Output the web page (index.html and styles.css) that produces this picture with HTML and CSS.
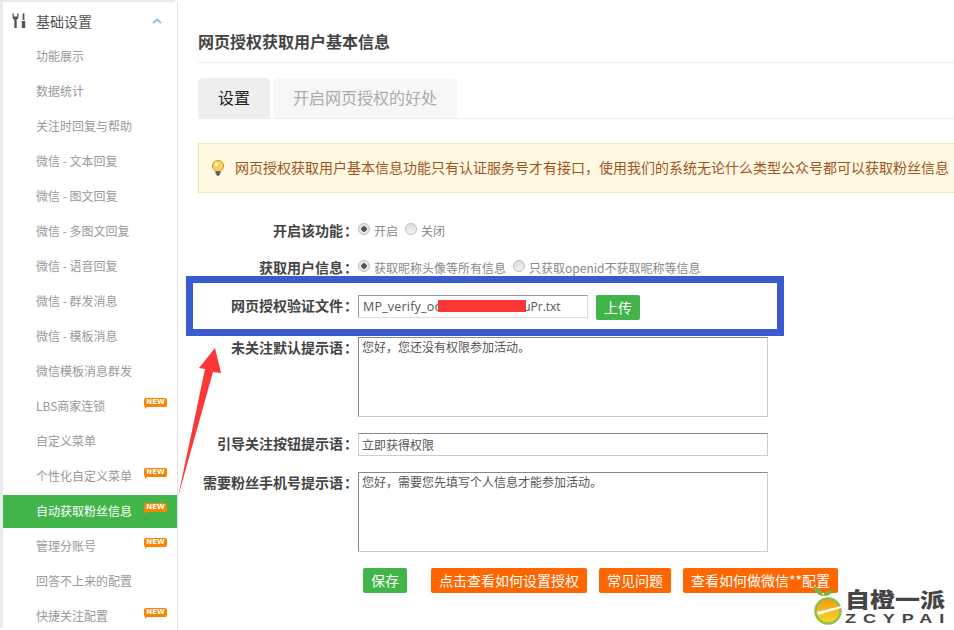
FILE: index.html
```html
<!DOCTYPE html>
<html lang="zh-CN">

<head>
    <meta charset="UTF-8">
    <title>网页授权获取用户基本信息</title>
    <link rel="stylesheet" href="styles.css">
</head>

<body>

    <!-- Sidebar -->
    <div class="sidebar">
        <div class="side-head">
            <svg class="tools-icon" width="14" height="16" viewBox="0 0 14 16">
                <path d="M0.5 0.5 L0.5 4 Q0.5 6 2.3 6.6 L2.3 15 L4.7 15 L4.7 6.6 Q6.5 6 6.5 4 L6.5 0.5 L5.2 0.5 L5.2 3.4 L1.8 3.4 L1.8 0.5 Z" fill="#555"/>
                <path d="M10.6 0.5 L12.4 0.5 L12.4 7 L10.6 7 Z M9.8 8 L13.2 8 L13.2 15 L9.8 15 Z" fill="#555"/>
            </svg>
            <span>基础设置</span>
            <svg class="chevron" width="10" height="6" viewBox="0 0 10 6">
                <path d="M1 5 L5 1.5 L9 5" fill="none" stroke="#8cc4e0" stroke-width="2"/>
            </svg>
        </div>
        <a class="side-item">功能展示</a>
        <a class="side-item">数据统计</a>
        <a class="side-item">关注时回复与帮助</a>
        <a class="side-item">微信 - 文本回复</a>
        <a class="side-item">微信 - 图文回复</a>
        <a class="side-item">微信 - 多图文回复</a>
        <a class="side-item">微信 - 语音回复</a>
        <a class="side-item">微信 - 群发消息</a>
        <a class="side-item">微信 - 模板消息</a>
        <a class="side-item">微信模板消息群发</a>
        <a class="side-item">LBS商家连锁<span class="new-badge">NEW</span></a>
        <a class="side-item">自定义菜单</a>
        <a class="side-item">个性化自定义菜单<span class="new-badge">NEW</span></a>
        <a class="side-item active">自动获取粉丝信息<span class="new-badge">NEW</span></a>
        <a class="side-item">管理分账号<span class="new-badge">NEW</span></a>
        <a class="side-item">回答不上来的配置</a>
        <a class="side-item">快捷关注配置<span class="new-badge">NEW</span></a>
    </div>

    <!-- Main content -->
    <div class="main">
        <h1 class="page-title">网页授权获取用户基本信息</h1>

        <div class="tabs">
            <div class="tab current">设置</div>
            <div class="tab">开启网页授权的好处</div>
        </div>

        <div class="notice">
            <svg class="bulb" width="14" height="16" viewBox="0 0 14 16">
                <circle cx="7" cy="6" r="5.6" fill="#f8d25c" stroke="#d89a2a" stroke-width="1"/>
                <circle cx="5.4" cy="4.4" r="1.8" fill="#fdf3c0"/>
                <rect x="4.5" y="11" width="5" height="3" fill="#666"/>
                <rect x="5.5" y="14" width="3" height="1.5" fill="#444"/>
            </svg>
            <span>网页授权获取用户基本信息功能只有认证服务号才有接口，使用我们的系统无论什么类型公众号都可以获取粉丝信息</span>
        </div>

        <!-- Form -->
        <div class="form-row row-radio gap-13">
            <label class="form-label">开启该功能<span class="colon">：</span></label>
            <div class="radios">
                <span class="radio checked"></span><span class="radio-text">开启</span>
                <span class="radio"></span><span class="radio-text">关闭</span>
            </div>
        </div>
        <div class="form-row row-radio gap-14">
            <label class="form-label">获取用户信息<span class="colon">：</span></label>
            <div class="radios">
                <span class="radio checked"></span><span class="radio-text">获取昵称头像等所有信息</span>
                <span class="radio"></span><span class="radio-text">只获取openid不获取昵称等信息</span>
            </div>
        </div>
        <div class="form-row gap-17">
            <label class="form-label">网页授权验证文件<span class="colon">：</span></label>
            <div class="file-input">MP_verify_oo<span class="file-tail">uPr.txt</span></div>
            <a class="btn green upload">上传</a>
        </div>
        <div class="form-row gap-16">
            <label class="form-label">未关注默认提示语<span class="colon">：</span></label>
            <div class="text-box tall">您好，您还没有权限参加活动。</div>
        </div>
        <div class="form-row gap-16">
            <label class="form-label">引导关注按钮提示语<span class="colon">：</span></label>
            <div class="text-box">立即获得权限</div>
        </div>
        <div class="form-row gap-16">
            <label class="form-label">需要粉丝手机号提示语<span class="colon">：</span></label>
            <div class="text-box tall">您好，需要您先填写个人信息才能参加活动。</div>
        </div>

        <div class="actions">
            <a class="btn green save">保存</a>
            <a class="btn orange">点击查看如何设置授权</a>
            <a class="btn orange">常见问题</a>
            <a class="btn orange">查看如何做微信**配置</a>
        </div>
    </div>

    <!-- Annotations over the screenshot -->
    <div class="mark-box"></div>
    <div class="mark-redact"></div>
    <svg class="mark-arrow" width="60" height="160" viewBox="0 0 60 160">
        <path d="M45 8 L51 33 L43 32 L8 157 L35 29 L29 28 Z" fill="#fb3737"/>
    </svg>

    <!-- Watermark logo -->
    <div class="logo">
        <svg class="logo-mark" width="30" height="40" viewBox="0 0 30 40">
            <defs>
                <linearGradient id="orange-fill" x1="0" y1="0" x2="0" y2="1">
                    <stop offset="0" stop-color="#f29a10"/>
                    <stop offset="1" stop-color="#fbd92a"/>
                </linearGradient>
            </defs>
            <path d="M9 10 Q2 8 0 0 Q8 1 10 9 Z" fill="#7cb342"/>
            <path d="M10 9 Q13 4 21 4 Q18 10 11 10 Z" fill="#7cb342"/>
            <circle cx="15" cy="25" r="12.5" fill="url(#orange-fill)" stroke="#8cc24a" stroke-width="2.5"/>
            <path d="M4 26 L28 20 L28 22 L5 29 Z" fill="#fff"/>
        </svg>
        <div class="logo-text">
            <div class="logo-cn">自橙一派</div>
            <div class="logo-en">ZCYPAI</div>
        </div>
    </div>

</body>

</html>
```

FILE: styles.css
```css
/* Page */
html, body {
    height: 630px;
    overflow: hidden;
}

body {
    margin: 0;
    display: flex;
    align-items: flex-start;
    background-color: #fff;
    font-family: "Noto Sans CJK SC", "Noto Sans", sans-serif;
    position: relative;
}

/* Sidebar */
.sidebar {
    width: 174px;
    height: 628px;
    margin-top: 2px;
    margin-left: 3px;
    flex-shrink: 0;
    overflow: hidden;
    background-color: #fff;
    box-shadow: -3px -2px 0 #e9ebf1;
    border-right: 1px solid #dfe2ea;
}

.side-head {
    height: 38px;
    display: flex;
    align-items: center;
    color: #555;
    font-size: 14px;
    line-height: 36px;
}

.tools-icon {
    margin-left: 9px;
    margin-right: 10px;
}

.chevron {
    margin-left: 60px;
}

.side-item {
    display: block;
    position: relative;
    height: 33px;
    line-height: 31px;
    margin-bottom: 2px;
    padding-left: 33px;
    color: #999;
    font-size: 12px;
}

.side-item.active {
    background-color: #42b54a;
    color: #fff;
}

/* NEW badge on menu items */
.new-badge {
    position: absolute;
    top: 8px;
    left: 141px;
    width: 23px;
    height: 9px;
    background-color: #f98500;
    border-radius: 2px;
    color: #fff;
    font-family: "DejaVu Sans", sans-serif;
    font-size: 7px;
    font-weight: bold;
    line-height: 9px;
    text-align: center;
}

.new-badge::after {
    content: "";
    position: absolute;
    left: 1px;
    bottom: -2px;
    border-top: 3px solid #f98500;
    border-right: 3px solid transparent;
}

/* Main */
.main {
    flex: 1;
    padding: 30px 0 0 20px;
    min-width: 0;
    white-space: nowrap;
}

.page-title {
    margin: 0;
    height: 32px;
    line-height: 22px;
    color: #444;
    font-size: 16px;
    font-weight: bold;
    border-bottom: 1px solid #eee;
}

/* Tabs */
.tabs {
    display: flex;
    gap: 3px;
    height: 40px;
    margin-top: 15px;
    border-bottom: 1px solid #eee;
}

.tab {
    padding: 0 20px;
    line-height: 38px;
    font-size: 16px;
    color: #aaa;
    background-color: #f7f7f7;
    border-radius: 5px 5px 0 0;
}

.tab.current {
    color: #222;
    background-color: #eee;
}

/* Notice */
.notice {
    display: flex;
    align-items: center;
    height: 48px;
    margin-top: 24px;
    margin-bottom: 27px;
    padding-left: 12px;
    color: #a5521e;
    font-size: 14px;
    line-height: 18px;
    background-color: #fdf9e3;
    border: 1px solid #f5e9aa;
    border-right: 0;
}

.notice span {
    position: relative;
    top: -1px;
}

.bulb {
    margin-right: 10px;
}

/* Form */
.form-row {
    display: flex;
    align-items: flex-start;
}

.row-radio {
    height: 24px;
}

.gap-13 {
    margin-bottom: 13px;
}

.gap-14 {
    margin-bottom: 14px;
}

.gap-16 {
    margin-bottom: 16px;
}

.gap-17 {
    margin-bottom: 17px;
}

.form-label {
    width: 160px;
    flex-shrink: 0;
    color: #444;
    font-size: 14px;
    font-weight: bold;
    line-height: 20px;
    text-align: right;
}

.colon {
    margin-left: 1px;
    font-family: "Noto Sans CJK TC", sans-serif;
}

.radios {
    display: flex;
    align-items: center;
    height: 20px;
    color: #888;
    font-size: 12px;
}

.radio {
    width: 10px;
    height: 10px;
    margin-right: 4px;
    border-radius: 50%;
    border: 1px solid #bbb;
    background: linear-gradient(#ddd, #f4f4f4);
    position: relative;
    top: -1px;
}

.radio.checked {
    background: radial-gradient(circle, #555 0 2.5px, #e8e8e8 3px);
}

.radio-text {
    margin-right: 7px;
}

.file-input {
    width: 224px;
    height: 21px;
    padding-left: 4px;
    border: 1px solid #ddd;
    border-top-color: #999;
    border-left-color: #999;
    color: #555;
    font-family: "Open Sans", sans-serif;
    font-size: 12.5px;
    line-height: 22px;
    letter-spacing: 0.2px;
    display: flex;
    justify-content: flex-start;
}

.file-tail {
    margin-left: 81px;
    font-size: 12px;
    letter-spacing: 0;
}

.text-box {
    width: 402px;
    height: 21px;
    padding: 0 3px;
    border: 1px solid #ccc;
    border-top-color: #888;
    color: #555;
    font-size: 12px;
    line-height: 22px;
}

.text-box.tall {
    height: 78px;
    border-left-color: #888;
    line-height: 18px;
}

/* Buttons */
.btn {
    display: inline-block;
    height: 25px;
    padding: 0 8px;
    border-radius: 2px;
    color: #fff;
    font-size: 14px;
    line-height: 24px;
    text-align: center;
}

.btn.green {
    background-color: #42b54a;
}

.btn.orange {
    background-color: #ff6600;
}

.btn.upload {
    width: 28px;
    margin-left: 8px;
}

.btn.save {
    width: 28px;
    margin-right: 12px;
}

.actions {
    display: flex;
    gap: 12px;
    padding-left: 165px;
}

/* Annotations */
.mark-box {
    position: absolute;
    left: 186px;
    top: 276px;
    width: 584px;
    height: 46px;
    border: 7px solid #3a5bd0;
}

.mark-redact {
    position: absolute;
    left: 438px;
    top: 300px;
    width: 88px;
    height: 12px;
    background-color: #fb3737;
}

.mark-arrow {
    position: absolute;
    left: 170px;
    top: 340px;
}

/* Logo */
.logo {
    position: absolute;
    left: 813px;
    top: 586px;
    display: flex;
    gap: 2px;
}

.logo-text {
    color: #444;
    font-weight: 900;
}

.logo-cn {
    font-size: 21px;
    line-height: 24px;
    transform: scaleX(1.19);
    transform-origin: left center;
}

.logo-en {
    margin-top: 3px;
    font-family: "Liberation Sans", sans-serif;
    font-size: 12px;
    line-height: 13px;
    letter-spacing: 4.6px;
    transform: scaleX(1.5);
    transform-origin: left center;
}
```
